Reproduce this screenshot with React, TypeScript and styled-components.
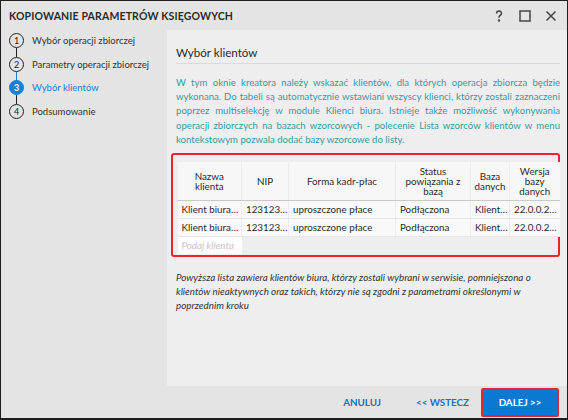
import React from "react"
import styled, { createGlobalStyle } from "styled-components"

const Global = createGlobalStyle`
  html, body {
    margin: 0;
    padding: 0;
    background: #e4e4e4;
  }
  body {
    font-family: Lato, "Open Sans", sans-serif;
    color: #222;
  }
  * {
    box-sizing: border-box;
  }
`

const Window = styled.div`
  width: 568px;
  height: 420px;
  border: 1px solid #1e1e1e;
  border-bottom-width: 2px;
  background: #e4e4e4;
  display: flex;
  flex-direction: column;
  overflow: hidden;
`

const TitleBar = styled.div`
  height: 28px;
  display: flex;
  align-items: center;
  padding: 2px 9px 0 8px;
  flex-shrink: 0;

  h1 {
    margin: 0;
    flex: 1;
    font-size: 10.5px;
    font-weight: 700;
    color: #2b2b2b;
    letter-spacing: 0.15px;
  }
`

const WinButtons = styled.div`
  display: flex;
  align-items: center;
  gap: 12px;

  svg {
    width: 14px;
    height: 14px;
  }
`

const Body = styled.div`
  flex: 1;
  display: flex;
  min-height: 0;
`

const Sidebar = styled.div`
  width: 166px;
  padding: 0 0 0 8px;
  display: flex;
  flex-direction: column;
`

const Step = styled.div<{ $active?: boolean; $line?: "dark" | "blue" }>`
  height: 23.5px;
  display: flex;
  align-items: center;
  gap: 8px;
  position: relative;
  font-size: 9.5px;
  color: ${(p) => (p.$active ? "#1a7fd4" : "#333")};

  &::after {
    content: "";
    display: ${(p) => (p.$line ? "block" : "none")};
    position: absolute;
    left: 7px;
    top: 19px;
    width: 1.3px;
    height: 9px;
    background: ${(p) => (p.$line === "blue" ? "#1a7fd4" : "#222")};
  }
`

const Circle = styled.span<{ $active?: boolean }>`
  width: 15px;
  height: 15px;
  border-radius: 50%;
  border: 1.3px solid ${(p) => (p.$active ? "#1a7fd4" : "#222")};
  background: ${(p) => (p.$active ? "#1a7fd4" : "transparent")};
  color: ${(p) => (p.$active ? "#fff" : "#222")};
  font-weight: ${(p) => (p.$active ? 700 : 400)};
  font-size: 9px;
  display: flex;
  align-items: center;
  justify-content: center;
  flex-shrink: 0;
`

const Content = styled.div`
  flex: 1;
  display: flex;
  flex-direction: column;
  min-width: 0;
`

const Panel = styled.div`
  flex: 1;
  margin-top: 1px;
  background: #eeeeee;
  padding: 15px 6px 0 9px;
`

const Heading = styled.h2`
  margin: 0;
  font-size: 11.6px;
  line-height: 16px;
  font-weight: 400;
  color: #2b2b2b;
  padding-bottom: 2px;
  border-bottom: 1px solid #dadada;
  margin-right: 1px;
`

const Intro = styled.p`
  margin: 12px 1px 0 0;
  font-size: 9.6px;
  line-height: 14.2px;
  color: #3a9a9e;
  text-align: justify;
`

const TableFrame = styled.div`
  margin: 6px 1px 0 -5px;
  border: 2px solid #e8262e;
  border-radius: 3px;
  padding: 7px 4.5px 0.5px 4.5px;
`

const Grid = styled.table`
  border-collapse: collapse;
  width: 382px;
  table-layout: fixed;
  font-size: 9.8px;
  color: #2b2b2b;

  th {
    background: #f7f7f7;
    font-weight: 400;
    height: 38px;
    line-height: 10px;
    padding: 0 3px;
    text-align: center;
    border-left: 1.5px solid #ececec;
    border-bottom: 1.5px solid #c9c9c9;
    vertical-align: middle;
  }

  td {
    background: #f9f9f9;
    height: 18px;
    padding: 0 3px 0 4px;
    white-space: nowrap;
    overflow: hidden;
    border-left: 1.5px solid #ececec;
    border-bottom: 1px solid #e6e6e6;
  }

  th:first-child,
  td:first-child {
    border-left: none;
  }
`

const EntryCell = styled.td`
  && {
    background: #ffffff;
    height: 16px;
    color: #c4c4c4;
    font-style: italic;
    border: none;
  }
`

const BlankCell = styled.td`
  && {
    background: transparent;
    border: none;
  }
`

const Note = styled.p`
  margin: 13px 20px 0 0;
  font-size: 9.8px;
  line-height: 14px;
  font-style: italic;
  color: #333;
`

const Footer = styled.div`
  height: 32px;
  display: flex;
  align-items: center;
  justify-content: flex-end;
  padding-right: 8px;
  flex-shrink: 0;
`

const LinkButton = styled.button<{ $space?: number }>`
  height: 28px;
  background: none;
  border: none;
  font-family: inherit;
  font-size: 9.8px;
  font-weight: 700;
  color: #1a6fc0;
  padding: 0 12px;
  margin-right: ${(p) => p.$space ?? 0}px;
`

const PrimaryButton = styled.button`
  width: 78px;
  height: 29px;
  background: #0b78d1;
  border: 2px solid #e0262f;
  border-radius: 2px;
  font-family: inherit;
  font-size: 9.8px;
  font-weight: 700;
  color: #fff;
`

const columns = [
  { title: "Nazwa klienta", width: 64 },
  { title: "NIP", width: 47 },
  { title: "Forma kadr-płac", width: 107 },
  { title: "Status powiązania z bazą", width: 75 },
  { title: "Baza danych", width: 39 },
  { title: "Wersja bazy danych", width: 50 },
]

// cells show the grid's truncated display values
const rows = [
  ["Klient biura…", "123123…", "uproszczone płace", "Podłączona", "Klient…", "22.0.0.2…"],
  ["Klient biura…", "123123…", "uproszczone płace", "Podłączona", "Klient…", "22.0.0.2…"],
]

const steps = [
  { n: 1, label: "Wybór operacji zbiorczej", line: "dark" as const },
  { n: 2, label: "Parametry operacji zbiorczej", line: "blue" as const },
  { n: 3, label: "Wybór klientów", line: "dark" as const, active: true },
  { n: 4, label: "Podsumowanie" },
]

export default function App() {
  return (
    <>
      <Global />
      <Window>
        <TitleBar>
          <h1>KOPIOWANIE PARAMETRÓW KSIĘGOWYCH</h1>
          <WinButtons>
            <svg viewBox="0 0 14 14" fill="none" stroke="#444" strokeWidth="1.5">
              <path d="M4.6 4.4a2.4 2.4 0 1 1 3.5 2.1c-.8.4-1.1.9-1.1 1.7v.6" />
              <circle cx="7" cy="11.4" r="0.5" fill="#444" />
            </svg>
            <svg viewBox="0 0 14 14" fill="none" stroke="#444" strokeWidth="1.5">
              <rect x="2" y="2" width="10" height="10" />
            </svg>
            <svg viewBox="0 0 14 14" fill="none" stroke="#444" strokeWidth="1.5">
              <path d="M2.5 2.5l9 9M11.5 2.5l-9 9" />
            </svg>
          </WinButtons>
        </TitleBar>
        <Body>
          <Sidebar>
            {steps.map((s) => (
              <Step key={s.n} $active={s.active} $line={s.line}>
                <Circle $active={s.active}>{s.n}</Circle>
                {s.label}
              </Step>
            ))}
          </Sidebar>
          <Content>
            <Panel>
              <Heading>Wybór klientów</Heading>
              <Intro>
                W tym oknie kreatora należy wskazać klientów, dla których operacja zbiorcza będzie
                wykonana. Do tabeli są automatycznie wstawiani wszyscy klienci, którzy zostali
                zaznaczeni poprzez multiselekcję w module Klienci biura. Istnieje także możliwość
                wykonywania operacji zbiorczych na bazach wzorcowych - polecenie Lista wzorców
                klientów w menu kontekstowym pozwala dodać bazy wzorcowe do listy.
              </Intro>
              <TableFrame>
                <Grid>
                  <colgroup>
                    {columns.map((c) => (
                      <col key={c.title} style={{ width: c.width }} />
                    ))}
                  </colgroup>
                  <thead>
                    <tr>
                      {columns.map((c) => (
                        <th key={c.title}>{c.title}</th>
                      ))}
                    </tr>
                  </thead>
                  <tbody>
                    {rows.map((r, i) => (
                      <tr key={i}>
                        {r.map((v, j) => (
                          <td key={j}>{v}</td>
                        ))}
                      </tr>
                    ))}
                    <tr>
                      <EntryCell>Podaj klienta</EntryCell>
                      <BlankCell colSpan={5} />
                    </tr>
                  </tbody>
                </Grid>
              </TableFrame>
              <Note>
                Powyższa lista zawiera klientów biura, którzy zostali wybrani w serwisie, pomniejszona o
                klientów nieaktywnych oraz takich, którzy nie są zgodni z parametrami określonymi w
                poprzednim kroku
              </Note>
            </Panel>
            <Footer>
              <LinkButton $space={11}>ANULUJ</LinkButton>
              <LinkButton>&lt;&lt; WSTECZ</LinkButton>
              <PrimaryButton>DALEJ &gt;&gt;</PrimaryButton>
            </Footer>
          </Content>
        </Body>
      </Window>
    </>
  )
}
